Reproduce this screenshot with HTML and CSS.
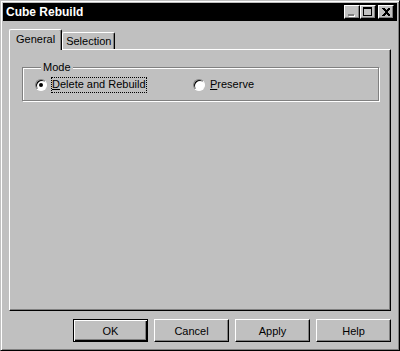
FILE: index.html
```html
<!doctype html>
<html lang="en">
  <head>
    <meta charset="UTF-8" />
    <meta name="viewport" content="width=device-width, initial-scale=1.0" />
    <title>Cube Rebuild</title>
    <link rel="stylesheet" href="styles.css">
  </head>
  <body>
    <div class="window">
      <div class="titlebar">
        <span class="title">Cube Rebuild</span>
        <div class="caption-buttons">
          <button class="cap-btn" disabled>
            <svg width="14" height="12" viewBox="0 0 14 12" shape-rendering="crispEdges">
              <rect x="4" y="9" width="6" height="2" fill="#fff" />
              <rect x="3" y="8" width="6" height="2" fill="#808080" />
            </svg>
          </button>
          <button class="cap-btn">
            <svg width="14" height="12" viewBox="0 0 14 12" shape-rendering="crispEdges">
              <path d="M2 1h9v9h-9z M3 3v6h7v-6z" fill="#000" fill-rule="evenodd" />
            </svg>
          </button>
          <button class="cap-btn cap-close">
            <svg width="14" height="12" viewBox="0 0 14 12" shape-rendering="crispEdges">
              <path d="M3 2h2l2 2l2-2h2v1l-3 3l3 3v1h-2l-2-2l-2 2h-2v-1l3-3l-3-3z" fill="#000" />
            </svg>
          </button>
        </div>
      </div>

      <div class="dialog">
        <div class="tabs">
          <div class="tab active">General</div>
          <div class="tab">Selection</div>
        </div>

        <div class="panel">
          <fieldset class="group">
            <legend>Mode</legend>
            <div class="options">
              <label class="option">
                <span class="radio checked"></span>
                <span class="option-text focused"><u>D</u>elete and Rebuild</span>
              </label>
              <label class="option">
                <span class="radio"></span>
                <span class="option-text"><u>P</u>reserve</span>
              </label>
            </div>
          </fieldset>
        </div>

        <div class="actions">
          <button class="btn default">OK</button>
          <button class="btn">Cancel</button>
          <button class="btn">Apply</button>
          <button class="btn">Help</button>
        </div>
      </div>
    </div>
  </body>
</html>
```

FILE: styles.css
```css
/* Classic dialog look */
body {
  margin: 0;
  background: #c0c0c0;
  font-family: "Liberation Sans", Arial, sans-serif;
  font-size: 11px;
  color: #000;
}
.window {
  width: 400px;
  height: 351px;
  box-sizing: border-box;
  display: flex;
  flex-direction: column;
  padding: 2px;
  background: #c0c0c0;
  border: 1px solid;
  border-color: #c0c0c0 #000 #000 #c0c0c0;
  box-shadow: inset 1px 1px #fff, inset -1px -1px #808080;
}
.titlebar {
  height: 18px;
  display: flex;
  align-items: center;
  justify-content: space-between;
  padding: 0 3px 0 3px;
  background: #000;
}
.title {
  color: #fff;
  font-weight: bold;
  font-size: 12px;
}
.caption-buttons {
  display: flex;
}
.cap-btn {
  width: 16px;
  height: 14px;
  padding: 0;
  display: flex;
  align-items: center;
  justify-content: center;
  background: #c0c0c0;
  border: 1px solid;
  border-color: #fff #000 #000 #fff;
  box-shadow: inset -1px -1px #808080;
}
.cap-close {
  margin-left: 2px;
}
.dialog {
  flex: 1;
  display: flex;
  flex-direction: column;
  padding: 8px 6px 6px 6px;
}
.tabs {
  height: 20px;
  display: flex;
  align-items: flex-end;
}
.tab {
  height: 17px;
  box-sizing: border-box;
  padding: 2px 3px 0 3px;
  border: 1px solid;
  border-color: #fff #000 transparent #fff;
  border-bottom: none;
  border-radius: 2px 2px 0 0;
  box-shadow: inset -1px 0 #808080;
}
.tab.active {
  height: 21px;
  padding: 3px 6px 0 6px;
  margin-bottom: -1px;
  position: relative;
  z-index: 1;
  background: #c0c0c0;
}
.panel {
  flex: 1;
  border: 1px solid;
  border-color: #fff #000 #000 #fff;
  box-shadow: inset -1px -1px #808080;
  padding: 11px 11px 0 12px;
}
.group {
  margin: 0;
  padding: 3px 0 7px 12px;
  border: 1px solid #808080;
  box-shadow: 1px 1px #fff, inset 1px 1px #fff;
}
.group legend {
  margin-left: 6px;
  padding: 0 2px;
  line-height: 13px;
  background: #c0c0c0;
}
.options {
  display: grid;
  grid-template-columns: 158px auto;
}
.option {
  display: flex;
  align-items: center;
  height: 16px;
}
.radio {
  width: 12px;
  height: 12px;
  box-sizing: border-box;
  border-radius: 50%;
  background: #fff;
  border: 1px solid;
  border-color: #808080 #fff #fff #808080;
  box-shadow: inset 1px 1px #000;
  display: flex;
  align-items: center;
  justify-content: center;
  margin-right: 4px;
}
.radio.checked::after {
  content: "";
  width: 4px;
  height: 4px;
  border-radius: 50%;
  background: #000;
}
.option-text {
  padding: 1px 1px 2px 1px;
  line-height: 13px;
}
.option-text.focused {
  outline: 1px dotted #000;
  outline-offset: -1px;
}
.actions {
  display: flex;
  justify-content: flex-end;
  gap: 6px;
  margin-top: 8px;
}
.btn {
  width: 75px;
  height: 23px;
  padding: 0;
  font-family: "Liberation Sans", Arial, sans-serif;
  font-size: 11px;
  color: #000;
  background: #c0c0c0;
  border: 1px solid;
  border-color: #fff #000 #000 #fff;
  box-shadow: inset -1px -1px #808080;
}
.btn.default {
  border-color: #000;
  box-shadow: inset 1px 1px #fff, inset -1px -1px #000, inset -2px -2px #808080;
}
```
